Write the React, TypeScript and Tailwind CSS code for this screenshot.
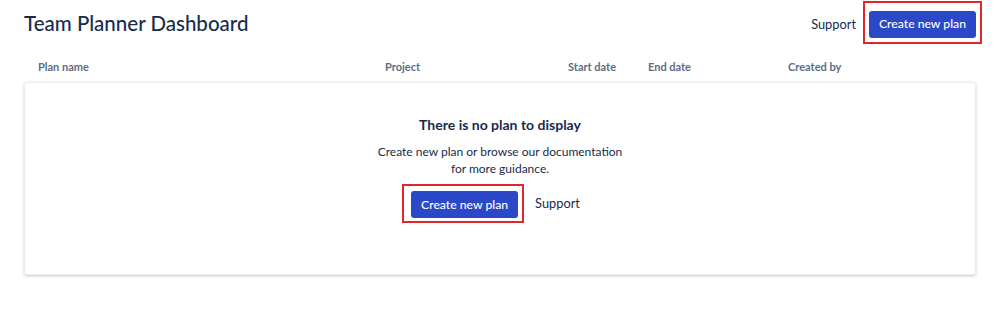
import React from 'react';

const columns = ['Plan name', 'Project', 'Start date', 'End date', 'Created by'];

function PrimaryButton({ label }: { label: string }) {
  return (
    <button className="h-[27px] rounded-[3px] bg-[#2b48c8] px-[10px] text-[12.2px] font-medium text-white">
      {label}
    </button>
  );
}

export default function App() {
  return (
    <div
      className="h-[331px] w-[999px] bg-white pl-[24px] pr-[23px] text-[#172b4d]"
      style={{ fontFamily: 'Lato, "Noto Sans", sans-serif' }}
    >
      {/* header */}
      <div className="flex items-start justify-between pt-px">
        <h1 className="mt-[8px] text-[20.5px] font-medium leading-[28px]">Team Planner Dashboard</h1>
        <div className="mr-[-6px] flex items-start gap-[7px]">
          <span className="mt-[14px] text-[12.8px] leading-[18px]">Support</span>
          <div className="border-2 border-[#e0262a] px-[4px] pb-[4px] pt-[7px]">
            <PrimaryButton label="Create new plan" />
          </div>
        </div>
      </div>

      {/* table head */}
      <div className="mt-[15px] grid grid-cols-[347px_183px_80px_140px_1fr] pl-[14px] text-[11px] font-bold leading-[16px] text-[#5e6c84]">
        {columns.map((c) => (
          <span key={c}>{c}</span>
        ))}
      </div>

      {/* empty state */}
      <div className="mt-[7px] flex h-[193px] flex-col items-center rounded-[3px] border border-[#ececec] shadow-[0_1px_3px_rgba(9,30,66,0.25)]">
        <h2 className="mt-[32px] text-[14px] font-bold leading-[20px]">There is no plan to display</h2>
        <p className="mt-[8px] text-center text-[12px] leading-[17px]">
          Create new plan or browse our documentation
          <br />
          for more guidance.
        </p>
        <div className="mt-[7px] mr-[18px] flex items-center gap-[11px]">
          <div className="border-2 border-[#e0262a] pb-[3px] pl-[7px] pr-[4px] pt-[5px]">
            <PrimaryButton label="Create new plan" />
          </div>
          <span className="text-[12.8px] leading-[18px]">Support</span>
        </div>
      </div>
    </div>
  );
}
